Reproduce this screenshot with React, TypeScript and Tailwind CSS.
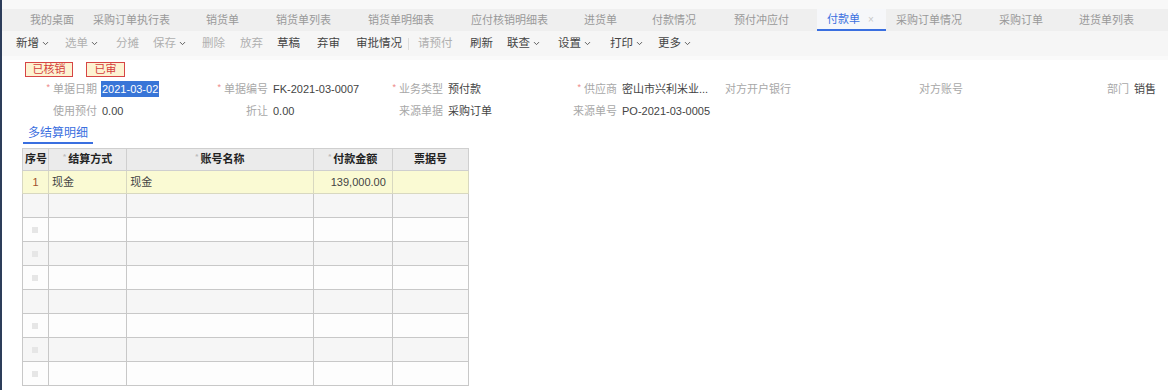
import { ChevronDown } from 'lucide-react';

const FONT = { fontFamily: '"Liberation Sans", "Noto Sans CJK SC", sans-serif' };

const TABS: { label: string; w: number; active?: boolean }[] = [
  { label: '我的桌面', w: 63 },
  { label: '采购订单执行表', w: 113 },
  { label: '销货单', w: 70 },
  { label: '销货单列表', w: 92 },
  { label: '销货单明细表', w: 103 },
  { label: '应付核销明细表', w: 113 },
  { label: '进货单', w: 68 },
  { label: '付款情况', w: 82 },
  { label: '预付冲应付', w: 93 },
  { label: '付款单', w: 69, active: true },
  { label: '采购订单情况', w: 103 },
  { label: '采购订单', w: 80 },
  { label: '进货单列表', w: 90 },
];

const TOOLS: { label: string; w: number; dim?: boolean; menu?: boolean; sep?: boolean }[] = [
  { label: '新增', w: 49, menu: true },
  { label: '选单', w: 51, menu: true, dim: true },
  { label: '分摊', w: 37, dim: true },
  { label: '保存', w: 49, menu: true, dim: true },
  { label: '删除', w: 38, dim: true },
  { label: '放弃', w: 37, dim: true },
  { label: '草稿', w: 40 },
  { label: '弃审', w: 39 },
  { label: '审批情况', w: 62, sep: true },
  { label: '请预付', w: 52, dim: true },
  { label: '刷新', w: 37 },
  { label: '联查', w: 51, menu: true },
  { label: '设置', w: 52, menu: true },
  { label: '打印', w: 48, menu: true },
  { label: '更多', w: 50, menu: true },
];

const COLS = [26, 78, 186, 79, 76];

function Field({ label, value, req, w, lw = 95, selected }: { label: string; value?: string; req?: boolean; w: number; lw?: number; selected?: boolean }) {
  return (
    <div className="flex items-center shrink-0 whitespace-nowrap" style={{ width: w }}>
      <div className="flex items-center justify-end text-[#a8a8a8] shrink-0" style={{ width: lw }}>
        {req && <span className="text-[#e88] text-[9px] mr-[3px] -mt-[3px]">*</span>}
        {label}
      </div>
      {value && (
        <span className={selected ? 'ml-1 bg-[#3875d7] text-white px-[1px]' : 'ml-[5px] text-[#444]'}>{value}</span>
      )}
    </div>
  );
}

export default function App() {
  const rows = Array.from({ length: 8 });
  return (
    <div className="flex w-[1168px] h-[390px] overflow-hidden bg-white text-[11px]" style={FONT}>
      <div className="w-[2px] shrink-0 bg-[#2d3d5a]" />
      <div className="flex-1 flex flex-col">
        <div className="h-[9px] bg-[#f8f8f8]" />
        <div className="h-[22px] bg-[#efefef] flex pl-[18px]">
          {TABS.map((t) => (
            <div
              key={t.label}
              className={
                'shrink-0 flex items-center pl-[10px] ' +
                (t.active ? 'bg-[#f6f7fa] text-[#3a6fe0] border-b-2 border-[#3a6fe0]' : 'text-[#999]')
              }
              style={{ width: t.w }}
            >
              {t.label}
              {t.active && <span className="ml-[8px] text-[#c8c8c8] text-[10px]">×</span>}
            </div>
          ))}
        </div>
        <div className="h-[25px] bg-[#f6f6f6] flex items-center pl-[14px] text-[11.5px]">
          {TOOLS.map((t) => (
            <div key={t.label} className="flex items-center shrink-0" style={{ width: t.w }}>
              <span className={t.dim ? 'text-[#b0b0b0]' : 'text-[#444]'}>{t.label}</span>
              {t.menu && <ChevronDown size={9} strokeWidth={2.5} className="ml-[2px] text-[#555]" />}
              {t.sep && <span className="ml-auto mr-[9px] h-[12px] w-px bg-[#dcdcdc]" />}
            </div>
          ))}
        </div>
        <div className="h-[4px] bg-[#fafafa]" />

        <div className="flex pl-[23px] mt-[2px]">
          <span className="h-[15px] w-[48px] flex items-center justify-center border border-[#d64545] bg-[#fdf3d2] text-[#d43c3c]">已核销</span>
          <span className="h-[15px] w-[39px] ml-[13px] flex items-center justify-center border border-[#d64545] bg-[#fdf3d2] text-[#d43c3c]">已审</span>
        </div>

        <div className="flex items-center h-[22px] mt-[1px]">
          <Field label="单据日期" value="2021-03-02" req w={171} selected />
          <Field label="单据编号" value="FK-2021-03-0007" req w={175} />
          <Field label="业务类型" value="预付款" req w={174} />
          <Field label="供应商" value="密山市兴利米业..." req w={174} />
          <Field label="对方开户银行" w={172} />
          <Field label="对方账号" w={172} />
          <Field label="部门" value="销售" w={120} lw={89} />
        </div>
        <div className="flex items-center h-[22px]">
          <Field label="使用预付" value="0.00" w={171} />
          <Field label="折让" value="0.00" w={175} />
          <Field label="来源单据" value="采购订单" w={174} />
          <Field label="来源单号" value="PO-2021-03-0005" w={174} />
        </div>

        <div className="pl-[21px] mt-[1px]">
          <div className="w-[70px] h-[21px] flex items-center justify-center text-[#3a6fe0] text-[12px] border-b-2 border-[#3a6fe0]">
            多结算明细
          </div>
        </div>

        <div className="pl-[20px] mt-[4px]">
          <table className="border-collapse border border-[#c4c4c4] table-fixed" style={{ width: 447 }}>
            <colgroup>
              {COLS.map((w, i) => (
                <col key={i} style={{ width: w }} />
              ))}
            </colgroup>
            <thead>
              <tr className="h-[22px] bg-[#ebebeb] text-[#222]">
                <th className="border border-[#cfcfcf] text-left pl-[2px] font-bold">序号</th>
                <th className="border border-[#cfcfcf] font-bold">
                  <span className="text-[#bbb] text-[8px] mr-[2px] align-top">*</span>结算方式
                </th>
                <th className="border border-[#cfcfcf] font-bold">
                  <span className="text-[#bbb] text-[8px] mr-[2px] align-top">*</span>账号名称
                </th>
                <th className="border border-[#cfcfcf] font-bold">
                  <span className="text-[#bbb] text-[8px] mr-[2px] align-top">*</span>付款金额
                </th>
                <th className="border border-[#cfcfcf] font-bold">票据号</th>
              </tr>
            </thead>
            <tbody>
              <tr className="h-[23px] bg-[#fafad3] text-[#444]">
                <td className="border border-[#d8d8c0] text-center text-[#a0522d]">1</td>
                <td className="border border-[#d8d8c0] pl-[3px]">现金</td>
                <td className="border border-[#d8d8c0] pl-[3px]">现金</td>
                <td className="border border-[#d8d8c0] text-right pr-[6px]">139,000.00</td>
                <td className="border border-[#d8d8c0]" />
              </tr>
              {rows.map((_, i) => (
                <tr key={i} className={'h-[24px] ' + (i % 2 === 0 ? 'bg-[#f6f6f6]' : 'bg-[#fdfdfd]')}>
                  <td className="border border-[#c8c8c8]">
                    {i !== 0 && i !== 4 && <div className="ml-[9px] w-[6px] h-[6px] bg-[#e6e6e6]" />}
                  </td>
                  <td className="border border-[#c8c8c8]" />
                  <td className="border border-[#c8c8c8]" />
                  <td className="border border-[#c8c8c8]" />
                  <td className="border border-[#c8c8c8]" />
                </tr>
              ))}
            </tbody>
          </table>
        </div>
      </div>
    </div>
  );
}
